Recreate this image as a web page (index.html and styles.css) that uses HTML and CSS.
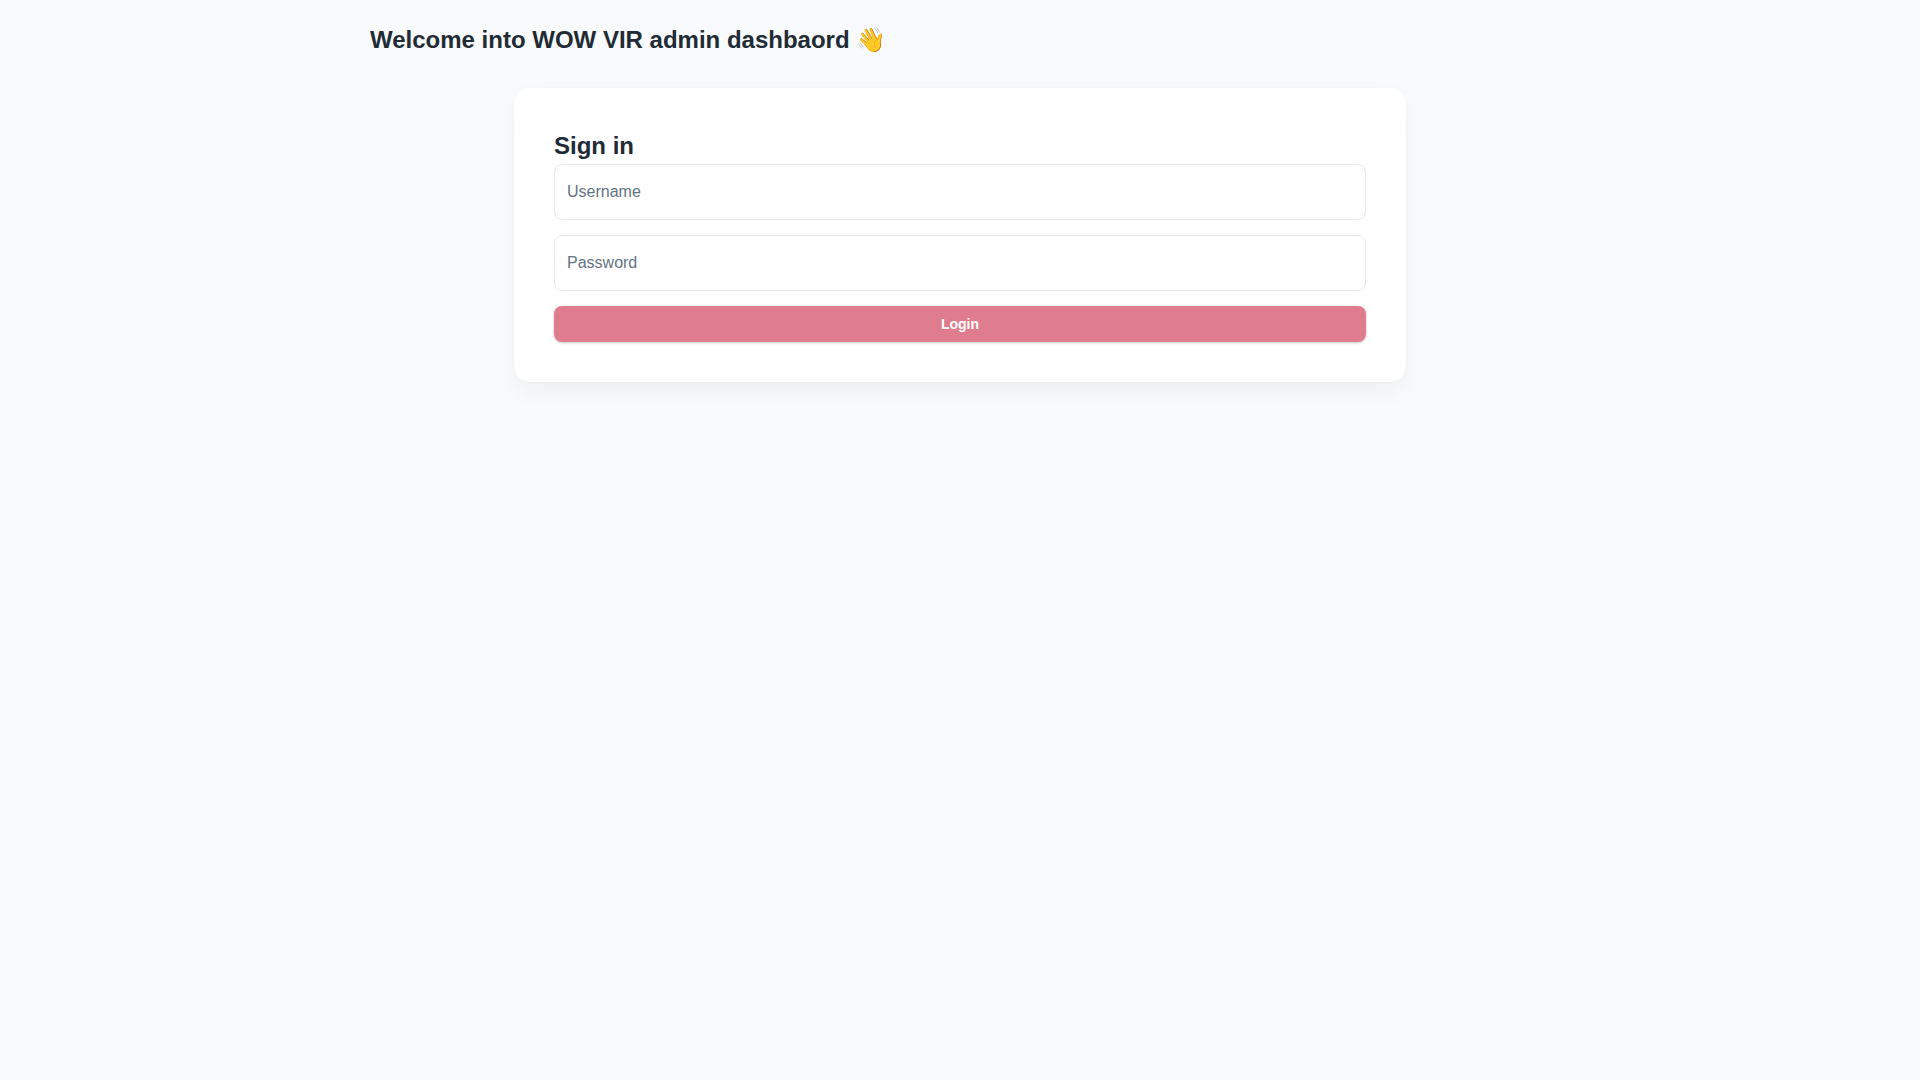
FILE: index.html
```html
<!DOCTYPE html>
<html lang="en">
<head>
    <meta charset="UTF-8">
    <meta name="viewport" content="width=device-width, initial-scale=1.0">
    <title>Admin Login</title>
    <link rel="stylesheet" href="styles.css">
</head>
<body>
    <div class="page">
        <header class="page-header">
            <h1>Welcome into WOW VIR admin dashbaord 👋</h1>
        </header>

        <!-- Login card -->
        <main class="login-card">
            <h2>Sign in</h2>
            <form class="login-form">
                <input type="text" name="username" placeholder="Username" aria-label="Username">
                <input type="password" name="password" placeholder="Password" aria-label="Password">
                <button type="submit">Login</button>
            </form>
        </main>
    </div>
</body>
</html>
```

FILE: styles.css
```css
* {
    margin: 0;
    padding: 0;
    box-sizing: border-box;
}
body {
    background-color: #f9fafb;
    font-family: "Liberation Sans", Arial, sans-serif;
    font-size: 16px;
    line-height: 24px;
    color: #212b36;
}
.page {
    max-width: 1180px;
    margin: 0 auto;
    padding: 22px 0;
}
h1, h2 {
    font-size: 24px;
    font-weight: 700;
    line-height: 36px;
}
.page-header {
    margin-bottom: 30px;
}
.login-card {
    max-width: 892px;
    margin: 0 auto;
    padding: 40px;
    background-color: #fff;
    border-radius: 16px;
    box-shadow: 0 0 2px rgba(145, 158, 171, 0.08), 0 12px 24px -4px rgba(145, 158, 171, 0.12);
}
.login-form {
    display: flex;
    flex-direction: column;
    gap: 15px;
}
.login-form input {
    width: 100%;
    padding: 15px 12px;
    border: 1px solid #e5e8eb;
    border-radius: 8px;
    background-color: #fff;
    font: inherit;
    color: #212b36;
}
.login-form input::placeholder {
    color: #637381;
}
.login-form button {
    padding: 8px 16px;
    border: none;
    border-radius: 8px;
    background-color: #df7d8e;
    box-shadow: 0 1px 3px rgba(0, 0, 0, 0.2);
    color: #fff;
    font: inherit;
    font-size: 14px;
    font-weight: 700;
    line-height: 20px;
    cursor: pointer;
}
.login-form button:hover {
    background-color: #d4687c;
}
```
